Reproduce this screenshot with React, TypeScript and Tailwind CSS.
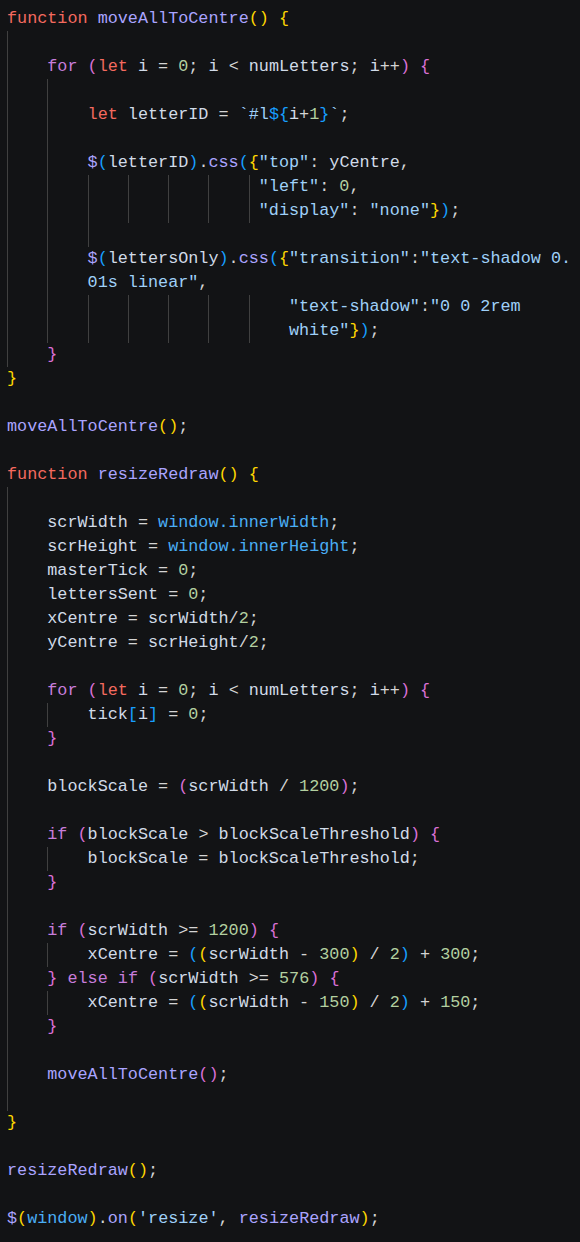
const colors: Record<string, string> = {
  k: 'text-[#f46a5f]',
  c: 'text-[#c77ddb]',
  f: 'text-[#aaa4ff]',
  v: 'text-[#d1dbe8]',
  s: 'text-[#9fd0f8]',
  n: 'text-[#b3d0a0]',
  w: 'text-[#4aaef5]',
  '1': 'text-[#ffd700]',
  '2': 'text-[#da70d6]',
  '3': 'text-[#179fff]',
  p: 'text-[#d4d4d4]',
};

type Line = [number[], ...string[]];

const forLoop = [
  'c|for', ' ', '2|(', 'k|let', ' ', 'v|i', ' = ', 'n|0', '; ', 'v|i', ' < ',
  'v|numLetters', '; ', 'v|i', '++', '2|)', ' ', '2|{',
];

const centreLine = (n: string) => [
  'v|xCentre', ' = ', '3|(', '1|(', 'v|scrWidth', ' - ', `n|${n}`, '1|)', ' / ',
  'n|2', '3|)', ' + ', `n|${n}`, ';',
];

const deep = [4, 4, 4, 4, 4, 4];

const lines: Line[] = [
  [[], 'k|function', ' ', 'f|moveAllToCentre', '1|()', ' ', '1|{'],
  [[4]],
  [[4], ...forLoop],
  [[4, 4]],
  [[4, 4], 'k|let', ' ', 'v|letterID', ' = ', 's|`#l', '3|${', 'v|i', '+', 'n|1', '3|}', 's|`', ';'],
  [[4, 4]],
  [[4, 4], 'f|$', '3|(', 'v|letterID', '3|)', '.', 'f|css', '3|(', '1|{', 's|"top"', ': ', 'v|yCentre', ','],
  [[...deep, 1], 's|"left"', ': ', 'n|0', ','],
  [[...deep, 1], 's|"display"', ': ', 's|"none"', '1|}', '3|)', ';'],
  [[4, 4, 4]],
  [[4, 4], 'f|$', '3|(', 'v|lettersOnly', '3|)', '.', 'f|css', '3|(', '1|{', 's|"transition"', ':', 's|"text-shadow 0.'],
  [[4, 4], 's|01s linear"', ','],
  [[...deep, 4], 's|"text-shadow"', ':', 's|"0 0 2rem'],
  [[...deep, 4], 's|white"', '1|}', '3|)', ';'],
  [[4], '2|}'],
  [[], '1|}'],
  [[]],
  [[], 'f|moveAllToCentre', '1|()', ';'],
  [[]],
  [[], 'k|function', ' ', 'f|resizeRedraw', '1|()', ' ', '1|{'],
  [[4]],
  [[4], 'v|scrWidth', ' = ', 'w|window.innerWidth', ';'],
  [[4], 'v|scrHeight', ' = ', 'w|window.innerHeight', ';'],
  [[4], 'v|masterTick', ' = ', 'n|0', ';'],
  [[4], 'v|lettersSent', ' = ', 'n|0', ';'],
  [[4], 'v|xCentre', ' = ', 'v|scrWidth', '/', 'n|2', ';'],
  [[4], 'v|yCentre', ' = ', 'v|scrHeight', '/', 'n|2', ';'],
  [[4]],
  [[4], ...forLoop],
  [[4, 4], 'v|tick', '3|[', 'v|i', '3|]', ' = ', 'n|0', ';'],
  [[4], '2|}'],
  [[4]],
  [[4], 'v|blockScale', ' = ', '2|(', 'v|scrWidth', ' / ', 'n|1200', '2|)', ';'],
  [[4]],
  [[4], 'c|if', ' ', '2|(', 'v|blockScale', ' > ', 'v|blockScaleThreshold', '2|)', ' ', '2|{'],
  [[4, 4], 'v|blockScale', ' = ', 'v|blockScaleThreshold', ';'],
  [[4], '2|}'],
  [[4]],
  [[4], 'c|if', ' ', '2|(', 'v|scrWidth', ' >= ', 'n|1200', '2|)', ' ', '2|{'],
  [[4, 4], ...centreLine('300')],
  [[4], '2|}', ' ', 'c|else', ' ', 'c|if', ' ', '2|(', 'v|scrWidth', ' >= ', 'n|576', '2|)', ' ', '2|{'],
  [[4, 4], ...centreLine('150')],
  [[4], '2|}'],
  [[4]],
  [[4], 'f|moveAllToCentre', '2|()', ';'],
  [[4]],
  [[], '1|}'],
  [[]],
  [[], 'f|resizeRedraw', '1|()', ';'],
  [[]],
  [[], 'f|$', '1|(', 'w|window', '1|)', '.', 'f|on', '1|(', "s|'resize'", ', ', 'f|resizeRedraw', '1|)', ';'],
];

const Token = ({ raw }: { raw: string }) => {
  const bar = raw.indexOf('|');
  if (bar === -1) return <span className={colors.p}>{raw}</span>;
  return <span className={colors[raw.slice(0, bar)]}>{raw.slice(bar + 1)}</span>;
};

export default function App() {
  return (
    <div className="h-[1242px] overflow-hidden bg-[#121315] pt-[7px] pl-[7px] font-['Liberation_Mono',monospace] text-[16.8px]">
      {lines.map(([guides, ...tokens], i) => (
        <div key={i} className="flex h-6 items-stretch whitespace-pre leading-6">
          {guides.map((w, j) => (
            <span
              key={j}
              className={`shrink-0 border-l border-[#404040] ${w === 4 ? 'w-[4ch]' : 'w-[1ch]'}`}
            />
          ))}
          <span>
            {tokens.map((t, j) => (
              <Token key={j} raw={t} />
            ))}
          </span>
        </div>
      ))}
    </div>
  );
}
